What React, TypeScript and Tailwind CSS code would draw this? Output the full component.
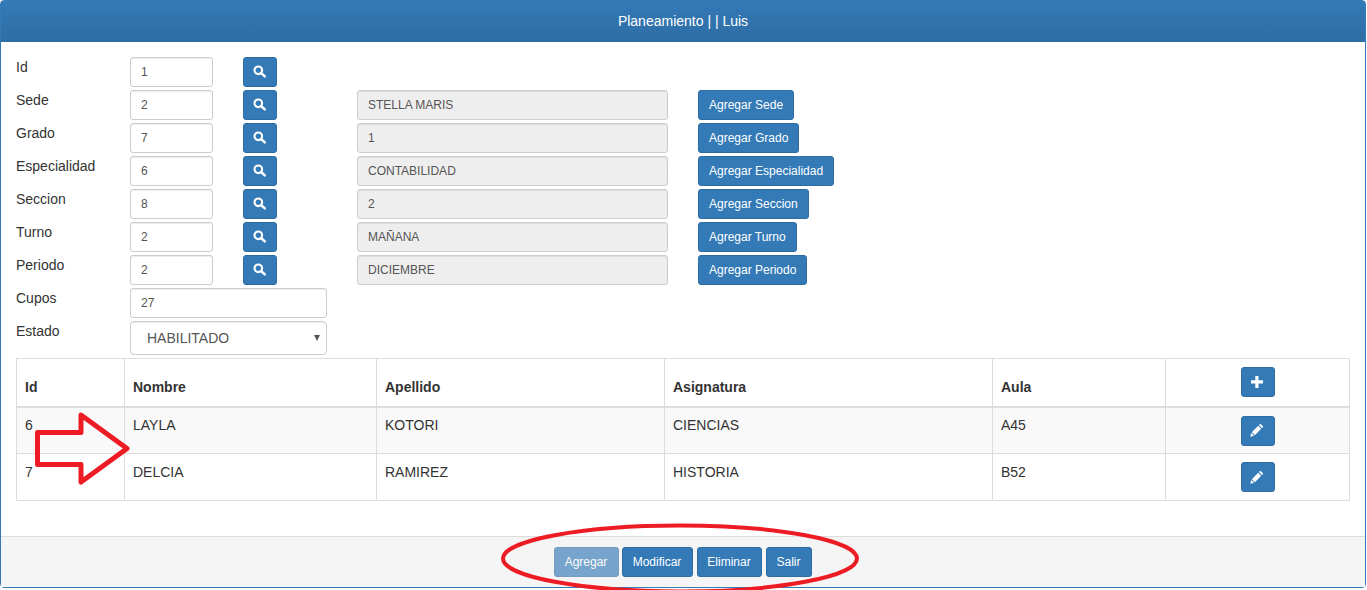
import React from "react";

const SearchIcon = () => (
  <svg className="-mt-[2px] -ml-[2px]" width="13" height="13" viewBox="0 0 13 13" fill="none">
    <circle cx="5.3" cy="5.3" r="3.8" stroke="white" strokeWidth="2.1" />
    <path d="M8 8l3.8 3.4" stroke="white" strokeWidth="2.5" strokeLinecap="round" />
  </svg>
);

const PlusIcon = () => (
  <svg className="-ml-[2px]" width="12" height="12" viewBox="0 0 12 12" fill="white">
    <path d="M4.3 0h3.2v4.3H12v3.2H7.5V12H4.3V7.5H0V4.3h4.3z" />
  </svg>
);

const PencilIcon = () => (
  <svg className="-mt-[1px] -ml-[2px]" width="14" height="14" viewBox="0 0 13 13" fill="white">
    <path d="M9.6.6l2.8 2.8-1.3 1.3-2.8-2.8zM7.6 2.6l2.8 2.8-5.9 5.9-2.8-2.8z" />
    <path d="M1.2 9.2l2.6 2.6-3.6 1z" />
  </svg>
);

const rows = [
  { label: "Id", value: "1" },
  { label: "Sede", value: "2", name: "STELLA MARIS", action: "Agregar Sede" },
  { label: "Grado", value: "7", name: "1", action: "Agregar Grado" },
  { label: "Especialidad", value: "6", name: "CONTABILIDAD", action: "Agregar Especialidad" },
  { label: "Seccion", value: "8", name: "2", action: "Agregar Seccion" },
  { label: "Turno", value: "2", name: "MAÑANA", action: "Agregar Turno" },
  { label: "Periodo", value: "2", name: "DICIEMBRE", action: "Agregar Periodo" },
];

const people = [
  { id: "6", nombre: "LAYLA", apellido: "KOTORI", asignatura: "CIENCIAS", aula: "A45" },
  { id: "7", nombre: "DELCIA", apellido: "RAMIREZ", asignatura: "HISTORIA", aula: "B52" },
];

const btn =
  "h-[30px] rounded-[3px] border border-[#2e6da4] bg-[#337ab7] text-xs leading-none text-white flex items-center justify-center";
const cell = "border border-[#ddd] px-2 align-top";

const App = () => {
  return (
    <div className="relative h-[590px] w-[1367px] overflow-hidden bg-white text-sm text-[#333] [font-family:'Liberation_Sans',Arial,sans-serif]">
      <div className="flex h-[588px] w-[1366px] flex-col rounded-[4px] border border-[#337ab7]">
        <div className="flex h-[41px] shrink-0 items-center justify-center bg-gradient-to-b from-[#337ab7] to-[#2e6da4] pb-[2px] text-sm text-white">
          Planeamiento | | Luis
        </div>

        <div className="flex flex-1 flex-col px-[15px] pt-[15px]">
          <div className="flex flex-col gap-[3px]">
            {rows.map((r) => (
              <div key={r.label} className="flex h-[30px] items-start">
                <label className="w-[114px] leading-5">{r.label}</label>
                <input
                  readOnly
                  value={r.value}
                  className="h-[30px] w-[83px] rounded-[3px] border border-[#ccc] px-[10px] text-xs text-[#555] shadow-[inset_0_1px_1px_rgba(0,0,0,0.075)]"
                />
                <button className={`${btn} ml-[30px] w-[34px]`}>
                  <SearchIcon />
                </button>
                {r.name && (
                  <>
                    <input
                      readOnly
                      value={r.name}
                      className="ml-[80px] h-[30px] w-[311px] rounded-[3px] border border-[#ccc] bg-[#eee] px-[10px] text-xs text-[#555] shadow-[inset_0_1px_1px_rgba(0,0,0,0.075)]"
                    />
                    <button className={`${btn} ml-[30px] px-[10px]`}>{r.action}</button>
                  </>
                )}
              </div>
            ))}
            <div className="flex h-[30px] items-start">
              <label className="w-[114px] leading-5">Cupos</label>
              <input
                readOnly
                value="27"
                className="h-[30px] w-[197px] rounded-[3px] border border-[#ccc] px-[10px] text-xs text-[#555] shadow-[inset_0_1px_1px_rgba(0,0,0,0.075)]"
              />
            </div>
            <div className="flex h-[34px] items-start">
              <label className="w-[114px] leading-5">Estado</label>
              <div className="relative flex h-[34px] w-[197px] items-center rounded-[4px] border border-[#ccc] pl-4 text-sm text-[#555] shadow-[inset_0_1px_1px_rgba(0,0,0,0.075)]">
                HABILITADO
                <span className="absolute top-[13px] right-[6px] h-0 w-0 border-x-[3.5px] border-t-[6px] border-x-transparent border-t-[#555]" />
              </div>
            </div>
          </div>

          <table className="mt-[3px] w-[1333px] table-fixed border-collapse border border-[#ddd] text-sm">
            <colgroup>
              <col className="w-[108px]" />
              <col className="w-[252px]" />
              <col className="w-[288px]" />
              <col className="w-[328px]" />
              <col className="w-[173px]" />
              <col className="w-[184px]" />
            </colgroup>
            <thead>
              <tr className="h-[48px] border-b-2 border-[#ddd]">
                {["Id", "Nombre", "Apellido", "Asignatura", "Aula"].map((h) => (
                  <th key={h} className="border-x border-[#ddd] px-2 pt-[10px] text-left font-bold">
                    {h}
                  </th>
                ))}
                <th className="border-x border-[#ddd]">
                  <button className={`${btn} mx-auto w-[34px]`}>
                    <PlusIcon />
                  </button>
                </th>
              </tr>
            </thead>
            <tbody>
              {people.map((p, i) => {
                const text = `${cell} ${i === 0 ? "pt-[7px]" : "pt-2"}`;
                return (
                  <tr key={p.id} className={`h-[47px] ${i === 0 ? "bg-[#f9f9f9]" : ""}`}>
                    <td className={text}>{p.id}</td>
                    <td className={text}>{p.nombre}</td>
                    <td className={text}>{p.apellido}</td>
                    <td className={text}>{p.asignatura}</td>
                    <td className={text}>{p.aula}</td>
                    <td className={`${cell} pt-2`}>
                      <button className={`${btn} mx-auto w-[34px]`}>
                        <PencilIcon />
                      </button>
                    </td>
                  </tr>
                );
              })}
            </tbody>
          </table>
        </div>

        <div className="flex h-[51px] shrink-0 items-start justify-center gap-[3px] border-t border-[#ddd] bg-[#f5f5f5] pt-[10px] pr-[1px]">
          <button className={`${btn} w-[65px] opacity-65`}>Agregar</button>
          <button className={`${btn} w-[71px]`}>Modificar</button>
          <button className={`${btn} ml-[1px] w-[65px]`}>Eliminar</button>
          <button className={`${btn} ml-[1px] w-[46px]`}>Salir</button>
        </div>
      </div>

      {/* red marks drawn over the capture */}
      <svg className="pointer-events-none absolute top-0 left-0" width="1367" height="590" fill="none">
        <path
          d="M37.5 432.5H81V415L127 448.5L81 482V464.5H37.5Z"
          stroke="#ed1c24"
          strokeWidth="5"
          strokeLinejoin="round"
        />
        <ellipse cx="680" cy="558.5" rx="177" ry="33" stroke="#ed1c24" strokeWidth="4" />
      </svg>
    </div>
  );
};

export default App;
